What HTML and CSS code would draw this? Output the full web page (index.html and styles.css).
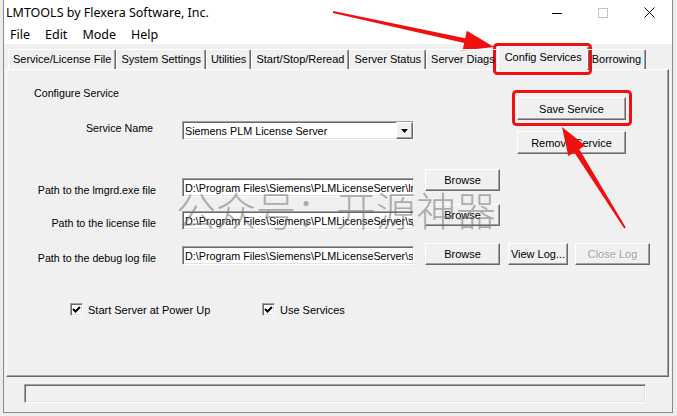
FILE: index.html
```html
<!DOCTYPE html>
<html lang="en">
<head>
  <meta charset="UTF-8">
  <title>LMTOOLS by Flexera Software, Inc.</title>
  <link rel="stylesheet" href="styles.css">
</head>
<body>
  <div class="window">
    <div class="titlebar">
      <span class="title">LMTOOLS by Flexera Software, Inc.</span>
      <div class="controls">
        <span class="ctl"><svg width="10" height="10"><path d="M0 5.5h10" stroke="#000"/></svg></span>
        <span class="ctl"><svg width="10" height="10"><rect x="0.5" y="0.5" width="9" height="9" fill="none" stroke="#c4c4c4"/></svg></span>
        <span class="ctl"><svg width="11" height="11"><path d="M0.5 0.5L10.5 10.5M10.5 0.5L0.5 10.5" stroke="#000"/></svg></span>
      </div>
    </div>

    <div class="menubar">
      <span>File</span>
      <span>Edit</span>
      <span>Mode</span>
      <span>Help</span>
    </div>

    <div class="tabs">
      <div class="tab">Service/License File</div>
      <div class="tab">System Settings</div>
      <div class="tab">Utilities</div>
      <div class="tab">Start/Stop/Reread</div>
      <div class="tab">Server Status</div>
      <div class="tab">Server Diags</div>
      <div class="tab active">Config Services</div>
      <div class="tab">Borrowing</div>
    </div>

    <div class="panel">
      <div class="top">
        <div class="top-left">
          <div class="heading">Configure Service</div>
          <div class="row service-row">
            <span class="lbl lbl-service">Service Name</span>
            <div class="field combo">
              <span class="field-text">Siemens PLM License Server</span>
              <span class="drop"><svg width="7" height="4"><path d="M0 0h7L3.5 4z" fill="#000"/></svg></span>
            </div>
          </div>
        </div>
        <div class="top-right">
          <button class="btn btn-wide">Save Service</button>
          <button class="btn btn-wide">Remove Service</button>
        </div>
      </div>

      <div class="row path-row r1">
        <span class="lbl">Path to the lmgrd.exe file</span>
        <div class="field"><span class="field-text">D:\Program Files\Siemens\PLMLicenseServer\lmgrd.exe</span></div>
        <button class="btn browse">Browse</button>
      </div>
      <div class="row path-row r2">
        <span class="lbl">Path to the license file</span>
        <div class="field"><span class="field-text">D:\Program Files\Siemens\PLMLicenseServer\splm8.lic</span></div>
        <button class="btn browse">Browse</button>
      </div>
      <div class="row path-row r3">
        <span class="lbl">Path to the debug log file</span>
        <div class="field"><span class="field-text">D:\Program Files\Siemens\PLMLicenseServer\splm8.log</span></div>
        <button class="btn browse">Browse</button>
        <button class="btn view-log">View Log...</button>
        <button class="btn close-log" disabled>Close Log</button>
      </div>

      <div class="checks">
        <label class="check-item first">
          <span class="box"><svg width="9" height="9"><path d="M1 4l2.5 2.5L8 2" fill="none" stroke="#000" stroke-width="2"/></svg></span>
          Start Server at Power Up
        </label>
        <label class="check-item">
          <span class="box"><svg width="9" height="9"><path d="M1 4l2.5 2.5L8 2" fill="none" stroke="#000" stroke-width="2"/></svg></span>
          Use Services
        </label>
      </div>
    </div>

    <div class="status"></div>
  </div>

  <div class="watermark">公众号：开源神器</div>

  <!-- red annotation marks drawn over the screenshot -->
  <svg class="marks" width="677" height="416">
    <rect x="494.5" y="44.5" width="96" height="29" rx="3" fill="none" stroke="#f01010" stroke-width="3"/>
    <rect x="513.5" y="91.5" width="117" height="33" rx="3" fill="none" stroke="#f01010" stroke-width="3"/>
    <polygon points="333.2,11 465.2,38.2 466.8,30.8 494,47 462.6,50.4 464.2,43 332.8,13" fill="#f01010"/>
    <polygon points="625.8,227.5 579.3,149.2 585.3,145.5 562,127 568.3,156.1 574.3,152.4 624.2,228.5" fill="#f01010"/>
  </svg>
</body>
</html>
```

FILE: styles.css
```css
/* Page */
body {
  margin: 0;
  width: 677px;
  height: 416px;
  overflow: hidden;
  position: relative;
  background: #ececec;
  font-family: "Liberation Sans", Arial, sans-serif;
  font-size: 11px;
  color: #000;
}

.window {
  margin-left: 3px;
  width: 670px;
  height: 413px;
  box-sizing: border-box;
  border: 1px solid #8a8a8a;
  border-top: none;
  background: #f0f0f0;
}

/* Title bar */
.titlebar {
  height: 25px;
  display: flex;
  align-items: center;
  background: #fff;
}

.title {
  padding-left: 2px;
  font-family: "Noto Sans", sans-serif;
  font-size: 12.5px;
}

.controls {
  margin-left: auto;
  display: flex;
}

.ctl {
  width: 46px;
  height: 25px;
  display: flex;
  align-items: center;
  justify-content: center;
}

/* Menu */
.menubar {
  height: 19px;
  display: flex;
  align-items: center;
  gap: 15px;
  padding-left: 6px;
  background: #fff;
  font-family: "Noto Sans", sans-serif;
  font-size: 12.5px;
}

/* Tabs */
.tabs {
  height: 25px;
  display: flex;
  align-items: flex-end;
  padding-left: 4px;
  position: relative;
  z-index: 1;
}

.tab {
  height: 20px;
  box-sizing: border-box;
  padding: 0 4px;
  line-height: 19px;
  white-space: nowrap;
  border-top: 1px solid #fff;
  border-left: 1px solid #fff;
  border-right: 1px solid #696969;
  box-shadow: inset -1px 0 #a0a0a0;
  border-radius: 2px 2px 0 0;
}

.tab.active {
  height: 24px;
  margin: 0 -2px -1px;
  padding: 0 6px;
  line-height: 21px;
  background: #f0f0f0;
}

/* Tab page */
.panel {
  margin-left: 2px;
  width: 663px;
  height: 308px;
  box-sizing: border-box;
  border: 1px solid;
  border-color: #fff #696969 #696969 #fff;
  box-shadow: inset -1px -1px #a0a0a0;
  font-size: 10.7px;
}

.top {
  display: flex;
  height: 84px;
}

.top-left {
  width: 407px;
}

.heading {
  margin: 17px 0 0 27px;
  line-height: 13px;
}

.service-row {
  margin-top: 21px;
}

.top-right {
  margin-left: 103px;
  padding-top: 27px;
  display: flex;
  flex-direction: column;
  gap: 11px;
}

.row {
  display: flex;
  align-items: flex-start;
}

.lbl {
  width: 150px;
  flex-shrink: 0;
  box-sizing: border-box;
  padding-right: 1px;
  text-align: right;
  line-height: 13px;
  margin-top: 6px;
  white-space: nowrap;
}

.lbl-service {
  padding-right: 4px;
  margin-top: 1px;
}

/* Sunken edit fields */
.field {
  margin-left: 25px;
  width: 232px;
  height: 19px;
  box-sizing: border-box;
  border: 1px solid;
  border-color: #a0a0a0 #fff #fff #a0a0a0;
  box-shadow: inset 1px 1px #696969, inset -1px -1px #e3e3e3;
  background: #fff;
  overflow: hidden;
  display: flex;
  align-items: center;
  font-size: 10.8px;
}

.field-text {
  padding-left: 2px;
  white-space: nowrap;
}

.combo {
  justify-content: space-between;
}

.drop {
  width: 17px;
  height: 17px;
  flex-shrink: 0;
  box-sizing: border-box;
  display: flex;
  align-items: center;
  justify-content: center;
  background: #f0f0f0;
  border: 1px solid;
  border-color: #fff #696969 #696969 #fff;
  box-shadow: inset -1px -1px #a0a0a0;
}

/* Buttons */
.btn {
  box-sizing: border-box;
  padding: 0;
  height: 22px;
  background: #f0f0f0;
  border: 1px solid;
  border-color: #fff #696969 #696969 #fff;
  box-shadow: inset -1px -1px #a0a0a0;
  font-family: "Liberation Sans", Arial, sans-serif;
  font-size: 11px;
  color: #000;
}

.btn-wide {
  width: 109px;
  height: 23px;
}

.browse {
  margin-left: 11px;
  width: 75px;
}

.r1 { margin-top: 24px; }
.r1 .browse { margin-top: -9px; }
.r2 { margin-top: 14px; }
.r2 .browse { margin-top: -7px; }
.r3 { margin-top: 16px; }
.r3 .btn { margin-top: -3px; }

.view-log {
  margin-left: 8px;
  width: 60px;
}

.close-log {
  margin-left: 7px;
  width: 75px;
  color: #a0a0a0;
  text-shadow: 1px 1px #fff;
}

/* Checkboxes */
.checks {
  margin-top: 38px;
  padding-left: 63px;
  display: flex;
}

.check-item {
  display: flex;
  align-items: center;
  gap: 5px;
  font-size: 11px;
}

.check-item.first {
  width: 192px;
}

.box {
  width: 13px;
  height: 13px;
  box-sizing: border-box;
  display: flex;
  align-items: center;
  justify-content: center;
  border: 1px solid;
  border-color: #a0a0a0 #fff #fff #a0a0a0;
  box-shadow: inset 1px 1px #696969, inset -1px -1px #e3e3e3;
  background: #fff;
}

/* Status bar */
.status {
  margin: 7px 0 0 20px;
  width: 622px;
  height: 19px;
  box-sizing: border-box;
  border: 1px solid;
  border-color: #a0a0a0 #fff #fff #a0a0a0;
  box-shadow: inset 1px 1px #696969, inset -1px -1px #e3e3e3;
}

/* Overlays */
.watermark {
  position: absolute;
  left: 176px;
  top: 189px;
  font-family: "Noto Sans CJK SC", sans-serif;
  font-size: 40px;
  font-weight: 300;
  line-height: 1;
  color: rgba(110, 110, 110, 0.55);
  white-space: nowrap;
  pointer-events: none;
}

.marks {
  position: absolute;
  left: 0;
  top: 0;
  pointer-events: none;
}
```
